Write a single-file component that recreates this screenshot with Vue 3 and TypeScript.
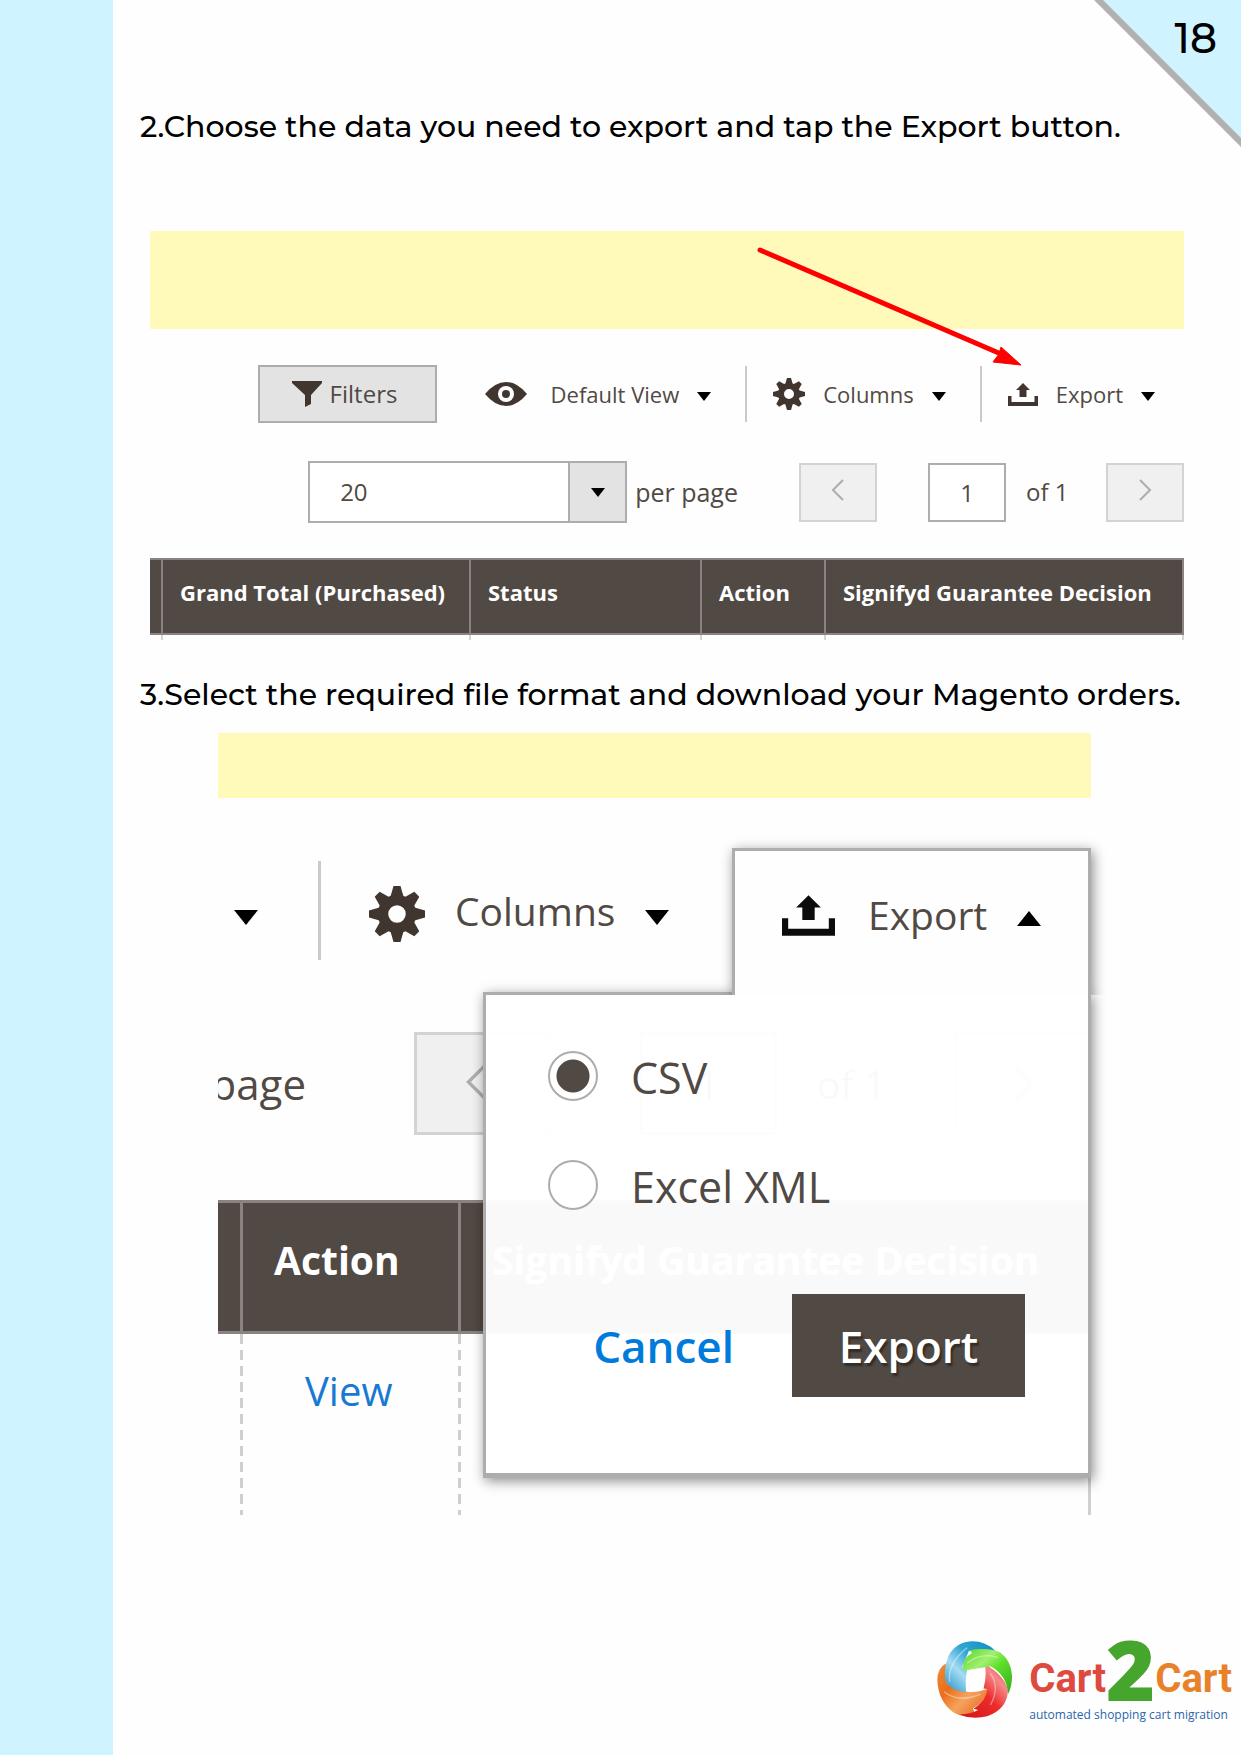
<script setup lang="ts">
import { ref } from 'vue'

const pageNumber = 18
const perPage = ref('20')
const currentPage = ref('1')
const format = ref('csv')

const formats = [
  { value: 'csv', label: 'CSV' },
  { value: 'xml', label: 'Excel XML' },
]

const gearAngles = [0, 45, 90, 135, 180, 225, 270, 315]
const trayPath = 'M0 13h3.500v6h23v-6H30v10H0zM15 0l7 7h-3.500v7h-7V7H8z'
</script>

<template>
  <div class="page">
    <aside class="stripe"></aside>

    <div class="corner">
      <svg viewBox="0 0 147 147" aria-hidden="true">
        <path d="M0 0h147v147z" fill="#b1b1b1" />
        <path d="M9 0h138v138z" fill="#d0f4ff" />
      </svg>
      <span class="number">{{ pageNumber }}</span>
    </div>

    <main class="content">
      <h2>2.Choose the data you need to export and tap the Export button.</h2>

      <section class="grid-shot">
        <div class="notice"></div>
        <svg class="pointer" viewBox="0 0 266 122" aria-hidden="true">
          <path d="M3 4L244 108" stroke="#fe0000" stroke-width="5" stroke-linecap="round" />
          <path d="M264 119L244 101l-2 7-6 8z" fill="#fe0000" stroke="#fe0000" />
        </svg>

        <div class="toolbar">
          <button class="filters" type="button">
            <svg width="30" height="26" viewBox="0 0 30 26" aria-hidden="true">
              <path d="M0 0h30v2L19 14v9l-6 3V14L0 2z" fill="currentColor" />
            </svg>
            <span>Filters</span>
          </button>
          <button class="tool view" type="button">
            <svg width="42" height="24" viewBox="0 0 42 24" aria-hidden="true">
              <path d="M0 12Q10 0 21 0t21 12Q32 24 21 24T0 12z" fill="currentColor" />
              <circle cx="21" cy="12" r="8" fill="#fff" />
              <circle cx="21" cy="12" r="4" fill="currentColor" />
            </svg>
            <span>Default View</span>
            <i class="caret"></i>
          </button>
          <button class="tool ruled" type="button">
            <svg width="32" height="32" viewBox="0 0 32 32" aria-hidden="true">
              <circle cx="16" cy="16" r="8" fill="none" stroke="currentColor" stroke-width="6" />
              <path v-for="a in gearAngles" :key="a" d="M12 7l2-7h4l2 7z" fill="currentColor" :transform="`rotate(${a} 16 16)`" />
            </svg>
            <span>Columns</span>
            <i class="caret"></i>
          </button>
          <button class="tool ruled" type="button">
            <svg width="30" height="23" viewBox="0 0 30 23" aria-hidden="true">
              <path :d="trayPath" fill="currentColor" />
            </svg>
            <span>Export</span>
            <i class="caret"></i>
          </button>
        </div>

        <div class="pager">
          <div class="select-box">
            <select id="per-page" v-model="perPage">
              <option>20</option>
              <option>50</option>
            </select>
            <span class="select-arrow"><i class="caret"></i></span>
          </div>
          <label class="per-label" for="per-page">per page</label>
          <button class="step" type="button" aria-label="Previous page">
            <svg width="14" height="22" viewBox="0 0 14 22" aria-hidden="true"><path d="M12 1L2 11l10 10" /></svg>
          </button>
          <input v-model="currentPage" class="current" type="text" aria-label="Page" />
          <span class="total">of 1</span>
          <button class="step" type="button" aria-label="Next page">
            <svg width="14" height="22" viewBox="0 0 14 22" aria-hidden="true"><path d="M2 1l10 10L2 21" /></svg>
          </button>
        </div>

        <table class="orders">
          <thead>
            <tr>
              <td></td>
              <th>Grand Total (Purchased)</th>
              <th>Status</th>
              <th>Action</th>
              <th>Signifyd Guarantee Decision</th>
            </tr>
          </thead>
          <tbody>
            <tr><td></td><td></td><td></td><td></td><td></td></tr>
          </tbody>
        </table>
      </section>

      <h2 class="second">3.Select the required file format and download your Magento orders.</h2>

      <section class="menu-shot">
        <div class="notice"></div>
        <div class="toolbar">
          <i class="caret"></i>
          <button class="tool ruled" type="button">
            <svg width="56" height="56" viewBox="0 0 32 32" aria-hidden="true">
              <circle cx="16" cy="16" r="8" fill="none" stroke="currentColor" stroke-width="6" />
              <path v-for="a in gearAngles" :key="a" d="M12 7l2-7h4l2 7z" fill="currentColor" :transform="`rotate(${a} 16 16)`" />
            </svg>
            <span>Columns</span>
            <i class="caret"></i>
          </button>
        </div>

        <div class="pager">
          <span class="cut"><span>page</span></span>
          <div class="steps">
            <button class="step previous" type="button" aria-label="Previous page">
              <svg width="24" height="38" viewBox="0 0 14 22" aria-hidden="true"><path d="M12 1L2 11l10 10" /></svg>
            </button>
            <input v-model="currentPage" class="current" type="text" aria-label="Page" />
            <span class="total">of 1</span>
            <button class="step" type="button" aria-label="Next page">
              <svg width="24" height="38" viewBox="0 0 14 22" aria-hidden="true"><path d="M2 1l10 10L2 21" /></svg>
            </button>
          </div>
        </div>

        <table class="orders">
          <thead>
            <tr>
              <td></td>
              <th>Action</th>
              <th>Signifyd Guarantee Decision</th>
            </tr>
          </thead>
          <tbody>
            <tr>
              <td></td>
              <td><a href="#view">View</a></td>
              <td></td>
            </tr>
          </tbody>
        </table>

        <div class="export-menu">
          <button class="tab" type="button">
            <svg width="53" height="41" viewBox="0 0 30 23" aria-hidden="true">
              <path :d="trayPath" fill="#0c0c0c" />
            </svg>
            <span>Export</span>
            <i class="caret up"></i>
          </button>
          <form class="panel" @submit.prevent>
            <label v-for="f in formats" :key="f.value" class="choice">
              <input v-model="format" type="radio" name="format" :value="f.value" />
              <span>{{ f.label }}</span>
            </label>
            <div class="actions">
              <button class="cancel" type="button">Cancel</button>
              <button class="submit" type="submit">Export</button>
            </div>
          </form>
        </div>
      </section>

      <footer class="brand">
        <svg width="75" height="77" viewBox="54 63 226 230" aria-hidden="true">
          <defs>
            <linearGradient id="blue" x1="1" y1="0" x2="0" y2="1">
              <stop offset="0" stop-color="#0f8dbd" />
              <stop offset=".4" stop-color="#2fa6d3" />
              <stop offset=".65" stop-color="#a5dcf2" />
              <stop offset="1" stop-color="#1d8fc6" />
            </linearGradient>
            <linearGradient id="green" x1="0" y1="0" x2="1" y2="1">
              <stop offset="0" stop-color="#52d62a" />
              <stop offset=".35" stop-color="#a2f070" />
              <stop offset=".55" stop-color="#5fe02a" />
              <stop offset="1" stop-color="#35a81d" />
            </linearGradient>
            <linearGradient id="red" x1="0" y1="1" x2="1" y2="0">
              <stop offset="0" stop-color="#cc1515" />
              <stop offset=".5" stop-color="#ee2c2c" />
              <stop offset=".75" stop-color="#f58a8a" />
              <stop offset="1" stop-color="#dd3030" />
            </linearGradient>
            <linearGradient id="orange" x1="0" y1="0" x2="1" y2="1">
              <stop offset="0" stop-color="#f08a35" />
              <stop offset=".35" stop-color="#e96f1a" />
              <stop offset=".6" stop-color="#f6a35e" />
              <stop offset="1" stop-color="#e05a10" />
            </linearGradient>
          </defs>
          <path d="M80 130Q55 145 55 180Q58 245 105 278Q140 295 172 288L162 265Q200 245 208 205Q170 220 140 214L84 190z" fill="url(#orange)" />
          <path d="M198 132Q205 170 194 205L206 207Q200 245 164 266L178 270Q150 285 118 283Q160 300 205 289Q265 268 268 212Q258 165 198 132z" fill="url(#red)" />
          <path d="M230 92Q200 62 158 63Q110 66 88 108Q70 160 82 188Q105 215 142 217Q138 180 145 148L130 140L150 92z" fill="url(#blue)" />
          <path d="M152 90Q205 80 244 96Q282 125 280 175Q278 205 268 222Q265 165 215 138Q175 145 132 152Q128 115 160 98z" fill="url(#green)" />
          <path d="M145 150L196 144L194 204L142 212z" fill="#fff" />
          <path d="M92 185Q85 130 145 82M145 128Q190 95 238 112M75 215Q120 250 185 222M215 160Q245 200 215 255" fill="none" stroke="#fff" stroke-opacity=".4" stroke-width="4" />
        </svg>
        <div class="wordmark">
          <p class="name"><span class="red">Cart</span><span class="two">2</span><span class="orange">Cart</span></p>
          <p class="tagline">automated shopping cart migration</p>
        </div>
      </footer>
    </main>
  </div>
</template>

<style>
body {
  margin: 0;
  background: #fff;
}
</style>

<style scoped>
* {
  box-sizing: border-box;
}

.page {
  position: relative;
  display: flex;
  min-height: 100vh;
  background: #fefefe;
  font-family: "Open Sans", "Noto Sans", sans-serif;
  color: #514943;
}

.stripe {
  flex: 0 0 113px;
  background: #d0f4ff;
}

.corner {
  position: absolute;
  top: 0;
  right: 0;
  width: 147px;
  height: 147px;
}

.corner svg {
  display: block;
}

.number {
  position: absolute;
  top: 13px;
  right: 24px;
  font: 500 42px/50px Montserrat, Inter, sans-serif;
  color: #000;
}

.content {
  flex: 1;
  min-width: 0;
  display: flex;
  flex-direction: column;
  padding: 107px 0 24px;
}

h2 {
  margin: 0 57px 0 27px;
  font: 500 30px/40px Montserrat, Inter, sans-serif;
  color: #000;
}

h2.second {
  margin-top: 35px;
}

button,
input,
select {
  margin: 0;
  padding: 0;
  border: 0;
  border-radius: 0;
  background: none;
  font: inherit;
  color: inherit;
}

svg {
  flex: none;
}

.notice {
  background: #fffaba;
}

.toolbar,
.pager,
.tool,
.filters,
.step,
.steps {
  display: flex;
  align-items: center;
}

.tool svg,
.filters svg {
  color: #41362f;
}

.tool {
  white-space: nowrap;
}

.caret {
  flex: none;
  border: 7px solid transparent;
  border-top: 9px solid #000;
  border-bottom: 0;
}

.step {
  justify-content: center;
  background: #f0f0f0;
  border: 2px solid #d3d3d3;
}

.step path {
  fill: none;
  stroke: #adadad;
  stroke-width: 2;
}

.current {
  border: 2px solid #adadad;
  background: #fff;
  text-align: center;
}

.orders {
  width: 100%;
  table-layout: fixed;
  border-collapse: separate;
  border-spacing: 0;
}

.orders th,
.orders td {
  padding: 0;
  text-align: left;
  vertical-align: top;
  white-space: nowrap;
}

.orders thead th,
.orders thead td {
  background: #514943;
  color: #fff;
  font-weight: 700;
}

/* order grid with its toolbar */
.grid-shot {
  position: relative;
  margin: 84px 57px 0 37px;
  font-size: 22px;
  line-height: 30px;
}

.grid-shot .notice {
  height: 98px;
}

.pointer {
  position: absolute;
  top: 15px;
  right: 161px;
  width: 266px;
  height: 122px;
}

.grid-shot .toolbar {
  justify-content: flex-end;
  margin-top: 36px;
  padding-right: 29px;
}

.filters {
  width: 179px;
  height: 58px;
  gap: 8px;
  padding-left: 32px;
  background: #e3e3e3;
  border: 2px solid #adadad;
  font-size: 24px;
}

.grid-shot .tool {
  height: 56px;
  gap: 18px;
}

.grid-shot .view {
  margin-left: 48px;
}

.view svg {
  margin-right: 6px;
}

.grid-shot .tool .caret {
  margin-top: 4px;
}

.grid-shot .ruled {
  margin-left: 34px;
  padding-left: 26px;
  border-left: 2px solid #cacaca;
}

.grid-shot .pager {
  justify-content: flex-end;
  margin-top: 38px;
  font-size: 24px;
}

.select-box {
  position: relative;
  width: 319px;
  height: 62px;
}

.select-box select {
  width: 100%;
  height: 100%;
  padding-left: 30px;
  border: 2px solid #adadad;
  background: #fff;
  appearance: none;
}

.select-arrow {
  position: absolute;
  top: 0;
  right: 0;
  display: flex;
  align-items: center;
  justify-content: center;
  width: 59px;
  height: 62px;
  border: 2px solid #adadad;
  background: #e3e3e3;
  pointer-events: none;
}

.per-label {
  margin: 0 61px 0 8px;
  font-size: 25px;
}

.grid-shot .step,
.grid-shot .current {
  width: 78px;
  height: 59px;
}

.grid-shot .step {
  padding-bottom: 4px;
}

.grid-shot .current {
  margin-left: 51px;
}

.grid-shot .total {
  width: 100px;
  padding-left: 20px;
}

.grid-shot .orders {
  margin-top: 35px;
}

.grid-shot .orders thead th,
.grid-shot .orders thead td {
  height: 77px;
  padding-top: 17px;
  border-top: 2px solid #8a837f;
  border-bottom: 2px solid #8a837f;
}

.grid-shot .orders th {
  padding-left: 17px;
  border-left: 2px solid #8a837f;
}

.grid-shot .orders th:last-child {
  border-right: 2px solid #8a837f;
}

.grid-shot .orders tbody td {
  height: 5px;
}

.grid-shot .orders tbody td + td {
  border-left: 2px solid #d6d6d6;
}

.grid-shot .orders tbody td:last-child {
  border-right: 2px solid #d6d6d6;
}

.grid-shot .orders thead td {
  width: 11px;
}

.grid-shot .orders th:nth-child(2) {
  width: 308px;
}

.grid-shot .orders th:nth-child(3) {
  width: 231px;
}

.grid-shot .orders th:nth-child(4) {
  width: 124px;
}

/* close-up with the export menu open */
.menu-shot {
  position: relative;
  margin: 18px 150px 0 105px;
  font-size: 39px;
  line-height: 54px;
}

.menu-shot .notice {
  height: 65px;
}

.menu-shot .caret {
  border-width: 15px 12px 0;
}

.menu-shot .toolbar {
  margin-top: 63px;
  padding-left: 16px;
}

.menu-shot .toolbar .caret {
  margin-top: 14px;
}

.menu-shot .ruled {
  height: 99px;
  gap: 30px;
  margin-left: 60px;
  padding-left: 48px;
  border-left: 3px solid #cacaca;
}

.menu-shot .ruled svg {
  margin-top: 6px;
}

.menu-shot .pager {
  justify-content: space-between;
  height: 103px;
  margin-top: 72px;
}

.cut {
  display: flex;
  justify-content: flex-end;
  width: 88px;
  overflow: hidden;
  font-size: 42px;
}

.menu-shot .step,
.menu-shot .current {
  width: 137px;
  height: 103px;
  border-width: 3px;
}

.menu-shot .previous {
  padding: 0 12px 4px 0;
}

.menu-shot .current {
  margin-left: 89px;
}

.menu-shot .total {
  width: 177px;
  padding-left: 40px;
}

.menu-shot .orders {
  margin-top: 65px;
}

.menu-shot .orders thead th,
.menu-shot .orders thead td {
  height: 134px;
  padding-top: 30px;
  border-top: 3px solid #8a837f;
  border-bottom: 3px solid #8a837f;
}

.menu-shot .orders th {
  padding-left: 31px;
  border-left: 3px solid #8a837f;
}

.menu-shot .orders thead td {
  width: 22px;
}

.menu-shot .orders th:nth-child(2) {
  width: 218px;
}

.menu-shot .orders tbody td {
  height: 181px;
}

.menu-shot .orders tbody td + td {
  padding: 30px 0 0 65px;
  background: repeating-linear-gradient(#cfcfcf 0 10px, transparent 10px 16px) 0 0 / 3px 100% no-repeat;
}

.menu-shot .orders tbody td:last-child {
  border-right: 3px solid #d0d0d0;
}

.orders a {
  color: #1979d2;
  font-size: 40px;
  text-decoration: none;
}

.export-menu {
  position: absolute;
  top: 115px;
  right: 0;
  display: flex;
  flex-direction: column;
  align-items: flex-end;
  width: 608px;
}

.tab,
.panel {
  border: 3px solid #adadad;
  box-shadow: 2px 3px 12px rgba(0, 0, 0, 0.45);
}

.tab {
  position: relative;
  z-index: 1;
  display: flex;
  align-items: flex-start;
  width: 359px;
  height: 147px;
  margin-bottom: -3px;
  padding: 44px 0 0 47px;
  border-bottom: 0;
  background: #fefefe;
  clip-path: inset(-20px -20px 0 -20px);
}

.tab span {
  margin: -7px 30px 0 33px;
}

.tab .caret {
  margin-top: 16px;
}

.menu-shot .caret.up {
  border-width: 0 12px 15px;
  border-top-color: transparent;
  border-bottom-style: solid;
  border-bottom-color: #000;
}

.panel {
  width: 100%;
  height: 486px;
  padding: 40px 0 0 62px;
  border-bottom-width: 5px;
  background: rgba(255, 255, 255, 0.97);
  font-size: 43px;
}

.choice {
  display: flex;
  align-items: center;
  gap: 33px;
  height: 82px;
  margin-bottom: 27px;
}

.choice span {
  padding-top: 4px;
}

.choice input {
  appearance: none;
  width: 50px;
  height: 50px;
  border: 2px solid #adadad;
  border-radius: 50%;
  background: #fff;
}

.choice input:checked {
  background: radial-gradient(circle, #514943 16px, #fff 17px);
}

.actions {
  display: flex;
  align-items: center;
  justify-content: flex-end;
  gap: 58px;
  margin-top: 68px;
  padding-right: 63px;
  font-size: 44px;
  font-weight: 600;
}

.cancel {
  color: #007bdb;
}

.submit {
  width: 233px;
  height: 103px;
  background: #514943;
  color: #fff;
  text-shadow: 2px 3px 2px rgba(0, 0, 0, 0.4);
}

/* company logo */
.brand {
  display: flex;
  align-self: flex-end;
  gap: 17px;
  margin: 126px 9px 0 0;
}

.brand p {
  margin: 0;
  white-space: nowrap;
}

.name {
  display: flex;
  align-items: flex-start;
  height: 62px;
}

.red,
.orange {
  padding-top: 18px;
  font: 700 40px/40px Roboto, sans-serif;
}

.red {
  color: #dd4b40;
}

.orange {
  color: #e8822a;
}

.two {
  font: 800 84px/56px "Open Sans", sans-serif;
  color: #45a52c;
}

.tagline {
  font: 400 12px/24px "Open Sans", sans-serif;
  color: #2c66a8;
}
</style>
